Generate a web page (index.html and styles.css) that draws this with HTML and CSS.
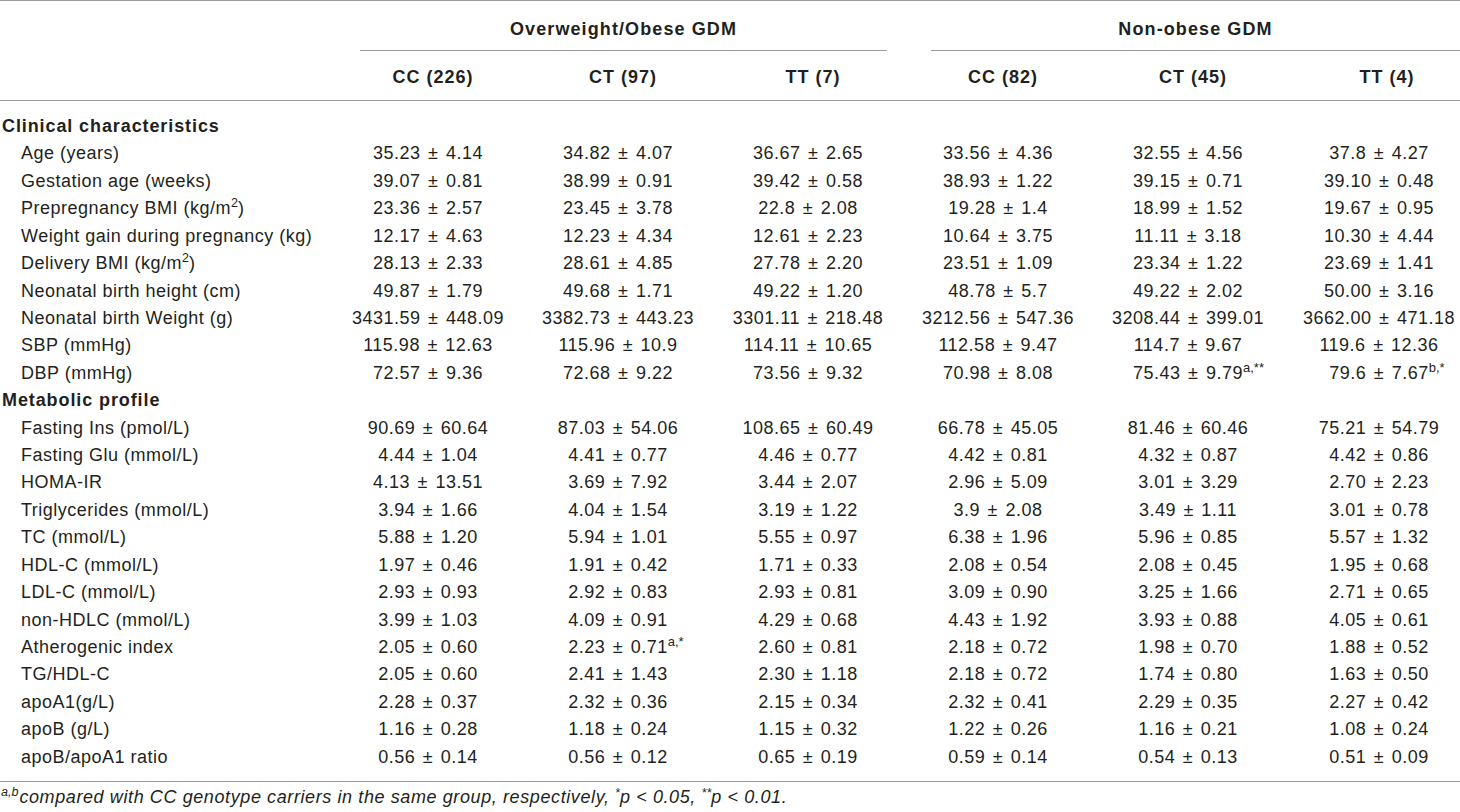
FILE: index.html
```html
<!DOCTYPE html>
<html lang="en">
<head>
<meta charset="utf-8">
<title>GDM genotype table</title>
<link rel="stylesheet" href="styles.css">
</head>
<body>
<div class="tbl">
  <div class="row group-row">
    <div></div>
    <div class="group obese">Overweight/Obese GDM</div>
    <div class="group nonobese">Non-obese GDM</div>
  </div>
  <div class="row sub-row">
    <div></div>
    <div class="h">CC (226)</div>
    <div class="h">CT (97)</div>
    <div class="h">TT (7)</div>
    <div class="h">CC (82)</div>
    <div class="h">CT (45)</div>
    <div class="h">TT (4)</div>
  </div>
  <div class="body">
    <div class="row section"><div class="label">Clinical characteristics</div></div>
    <div class="row data"><div class="label">Age (years)</div><div class="val">35.23 ± 4.14</div><div class="val">34.82 ± 4.07</div><div class="val">36.67 ± 2.65</div><div class="val">33.56 ± 4.36</div><div class="val">32.55 ± 4.56</div><div class="val">37.8 ± 4.27</div></div>
    <div class="row data"><div class="label">Gestation age (weeks)</div><div class="val">39.07 ± 0.81</div><div class="val">38.99 ± 0.91</div><div class="val">39.42 ± 0.58</div><div class="val">38.93 ± 1.22</div><div class="val">39.15 ± 0.71</div><div class="val">39.10 ± 0.48</div></div>
    <div class="row data"><div class="label">Prepregnancy BMI (kg/m<span class="pow">2</span>)</div><div class="val">23.36 ± 2.57</div><div class="val">23.45 ± 3.78</div><div class="val">22.8 ± 2.08</div><div class="val">19.28 ± 1.4</div><div class="val">18.99 ± 1.52</div><div class="val">19.67 ± 0.95</div></div>
    <div class="row data"><div class="label">Weight gain during pregnancy (kg)</div><div class="val">12.17 ± 4.63</div><div class="val">12.23 ± 4.34</div><div class="val">12.61 ± 2.23</div><div class="val">10.64 ± 3.75</div><div class="val">11.11 ± 3.18</div><div class="val">10.30 ± 4.44</div></div>
    <div class="row data"><div class="label">Delivery BMI (kg/m<span class="pow">2</span>)</div><div class="val">28.13 ± 2.33</div><div class="val">28.61 ± 4.85</div><div class="val">27.78 ± 2.20</div><div class="val">23.51 ± 1.09</div><div class="val">23.34 ± 1.22</div><div class="val">23.69 ± 1.41</div></div>
    <div class="row data"><div class="label">Neonatal birth height (cm)</div><div class="val">49.87 ± 1.79</div><div class="val">49.68 ± 1.71</div><div class="val">49.22 ± 1.20</div><div class="val">48.78 ± 5.7</div><div class="val">49.22 ± 2.02</div><div class="val">50.00 ± 3.16</div></div>
    <div class="row data"><div class="label">Neonatal birth Weight (g)</div><div class="val">3431.59 ± 448.09</div><div class="val">3382.73 ± 443.23</div><div class="val">3301.11 ± 218.48</div><div class="val">3212.56 ± 547.36</div><div class="val">3208.44 ± 399.01</div><div class="val">3662.00 ± 471.18</div></div>
    <div class="row data"><div class="label">SBP (mmHg)</div><div class="val">115.98 ± 12.63</div><div class="val">115.96 ± 10.9</div><div class="val">114.11 ± 10.65</div><div class="val">112.58 ± 9.47</div><div class="val">114.7 ± 9.67</div><div class="val">119.6 ± 12.36</div></div>
    <div class="row data"><div class="label">DBP (mmHg)</div><div class="val">72.57 ± 9.36</div><div class="val">72.68 ± 9.22</div><div class="val">73.56 ± 9.32</div><div class="val">70.98 ± 8.08</div><div class="val">75.43 ± 9.79<span class="sup">a,**</span></div><div class="val">79.6 ± 7.67<span class="sup">b,*</span></div></div>
    <div class="row section"><div class="label">Metabolic profile</div></div>
    <div class="row data"><div class="label">Fasting Ins (pmol/L)</div><div class="val">90.69 ± 60.64</div><div class="val">87.03 ± 54.06</div><div class="val">108.65 ± 60.49</div><div class="val">66.78 ± 45.05</div><div class="val">81.46 ± 60.46</div><div class="val">75.21 ± 54.79</div></div>
    <div class="row data"><div class="label">Fasting Glu (mmol/L)</div><div class="val">4.44 ± 1.04</div><div class="val">4.41 ± 0.77</div><div class="val">4.46 ± 0.77</div><div class="val">4.42 ± 0.81</div><div class="val">4.32 ± 0.87</div><div class="val">4.42 ± 0.86</div></div>
    <div class="row data"><div class="label">HOMA-IR</div><div class="val">4.13 ± 13.51</div><div class="val">3.69 ± 7.92</div><div class="val">3.44 ± 2.07</div><div class="val">2.96 ± 5.09</div><div class="val">3.01 ± 3.29</div><div class="val">2.70 ± 2.23</div></div>
    <div class="row data"><div class="label">Triglycerides (mmol/L)</div><div class="val">3.94 ± 1.66</div><div class="val">4.04 ± 1.54</div><div class="val">3.19 ± 1.22</div><div class="val">3.9 ± 2.08</div><div class="val">3.49 ± 1.11</div><div class="val">3.01 ± 0.78</div></div>
    <div class="row data"><div class="label">TC (mmol/L)</div><div class="val">5.88 ± 1.20</div><div class="val">5.94 ± 1.01</div><div class="val">5.55 ± 0.97</div><div class="val">6.38 ± 1.96</div><div class="val">5.96 ± 0.85</div><div class="val">5.57 ± 1.32</div></div>
    <div class="row data"><div class="label">HDL-C (mmol/L)</div><div class="val">1.97 ± 0.46</div><div class="val">1.91 ± 0.42</div><div class="val">1.71 ± 0.33</div><div class="val">2.08 ± 0.54</div><div class="val">2.08 ± 0.45</div><div class="val">1.95 ± 0.68</div></div>
    <div class="row data"><div class="label">LDL-C (mmol/L)</div><div class="val">2.93 ± 0.93</div><div class="val">2.92 ± 0.83</div><div class="val">2.93 ± 0.81</div><div class="val">3.09 ± 0.90</div><div class="val">3.25 ± 1.66</div><div class="val">2.71 ± 0.65</div></div>
    <div class="row data"><div class="label">non-HDLC (mmol/L)</div><div class="val">3.99 ± 1.03</div><div class="val">4.09 ± 0.91</div><div class="val">4.29 ± 0.68</div><div class="val">4.43 ± 1.92</div><div class="val">3.93 ± 0.88</div><div class="val">4.05 ± 0.61</div></div>
    <div class="row data"><div class="label">Atherogenic index</div><div class="val">2.05 ± 0.60</div><div class="val">2.23 ± 0.71<span class="sup">a,*</span></div><div class="val">2.60 ± 0.81</div><div class="val">2.18 ± 0.72</div><div class="val">1.98 ± 0.70</div><div class="val">1.88 ± 0.52</div></div>
    <div class="row data"><div class="label">TG/HDL-C</div><div class="val">2.05 ± 0.60</div><div class="val">2.41 ± 1.43</div><div class="val">2.30 ± 1.18</div><div class="val">2.18 ± 0.72</div><div class="val">1.74 ± 0.80</div><div class="val">1.63 ± 0.50</div></div>
    <div class="row data"><div class="label">apoA1(g/L)</div><div class="val">2.28 ± 0.37</div><div class="val">2.32 ± 0.36</div><div class="val">2.15 ± 0.34</div><div class="val">2.32 ± 0.41</div><div class="val">2.29 ± 0.35</div><div class="val">2.27 ± 0.42</div></div>
    <div class="row data"><div class="label">apoB (g/L)</div><div class="val">1.16 ± 0.28</div><div class="val">1.18 ± 0.24</div><div class="val">1.15 ± 0.32</div><div class="val">1.22 ± 0.26</div><div class="val">1.16 ± 0.21</div><div class="val">1.08 ± 0.24</div></div>
    <div class="row data"><div class="label">apoB/apoA1 ratio</div><div class="val">0.56 ± 0.14</div><div class="val">0.56 ± 0.12</div><div class="val">0.65 ± 0.19</div><div class="val">0.59 ± 0.14</div><div class="val">0.54 ± 0.13</div><div class="val">0.51 ± 0.09</div></div>
  </div>
</div>
<p class="note"><span class="note-sup">a,b</span>compared with CC genotype carriers in the same group, respectively, <span class="note-star">*</span>p &lt; 0.05, <span class="note-star">**</span>p &lt; 0.01.</p>
</body>
</html>
```
FILE: styles.css
```css
html, body {
  margin: 0;
  padding: 0;
  background: #ffffff;
  overflow: hidden;
}

body {
  font-family: "Liberation Sans", Arial, Helvetica, sans-serif;
  font-size: 18px;
  letter-spacing: 0.5px;
  color: #231f20;
}

.tbl {
  width: 1460px;
  border-top: 1px solid #9a9a9a;
}

.row {
  display: grid;
  grid-template-columns: 333px repeat(5, 190px) 177px;
  align-items: center;
}

.group-row {
  height: 50px;
}

.group {
  grid-column: span 3;
  align-self: stretch;
  display: flex;
  align-items: center;
  justify-content: center;
  padding-top: 8px;
  border-bottom: 1px solid #9a9a9a;
  font-weight: bold;
  letter-spacing: 1.1px;
}

.group.obese {
  margin-left: 27px;
  margin-right: 16px;
}

.group.nonobese {
  margin-left: 28px;
}

.sub-row {
  box-sizing: border-box;
  height: 50px;
  padding-top: 4px;
  border-bottom: 1px solid #9a9a9a;
}

.sub-row .h {
  text-align: center;
  font-weight: bold;
  letter-spacing: 1px;
  padding-left: 10px;
}

.sub-row .h:last-child {
  padding-left: 31px;
}

.body {
  padding: 11.8px 0 10px;
  border-bottom: 1px solid #9a9a9a;
}

.data,
.section {
  height: 27.43px;
}

.label {
  padding-left: 21px;
  white-space: nowrap;
}

.section .label {
  padding-left: 2px;
  font-weight: bold;
  letter-spacing: 0.9px;
}

.val {
  text-align: center;
  word-spacing: 2px;
  white-space: nowrap;
}

.val:last-child {
  padding-left: 15px;
}

.pow {
  font-size: 12.5px;
  vertical-align: 7px;
  line-height: 0;
  letter-spacing: 0;
}

.sup {
  display: inline-block;
  width: 0;
  font-size: 13px;
  letter-spacing: 0;
  word-spacing: 0;
  vertical-align: 7px;
  line-height: 0;
  white-space: nowrap;
}

.note {
  margin: 5px 0 0;
  padding-left: 1px;
  font-style: italic;
  line-height: 20px;
  letter-spacing: 0.6px;
  white-space: nowrap;
}

.note-sup {
  font-size: 12.5px;
  vertical-align: 7px;
  line-height: 0;
  letter-spacing: 0;
  margin-right: 1px;
}

.note-star {
  font-size: 12.5px;
  vertical-align: 6px;
  line-height: 0;
  letter-spacing: 0;
}
```
